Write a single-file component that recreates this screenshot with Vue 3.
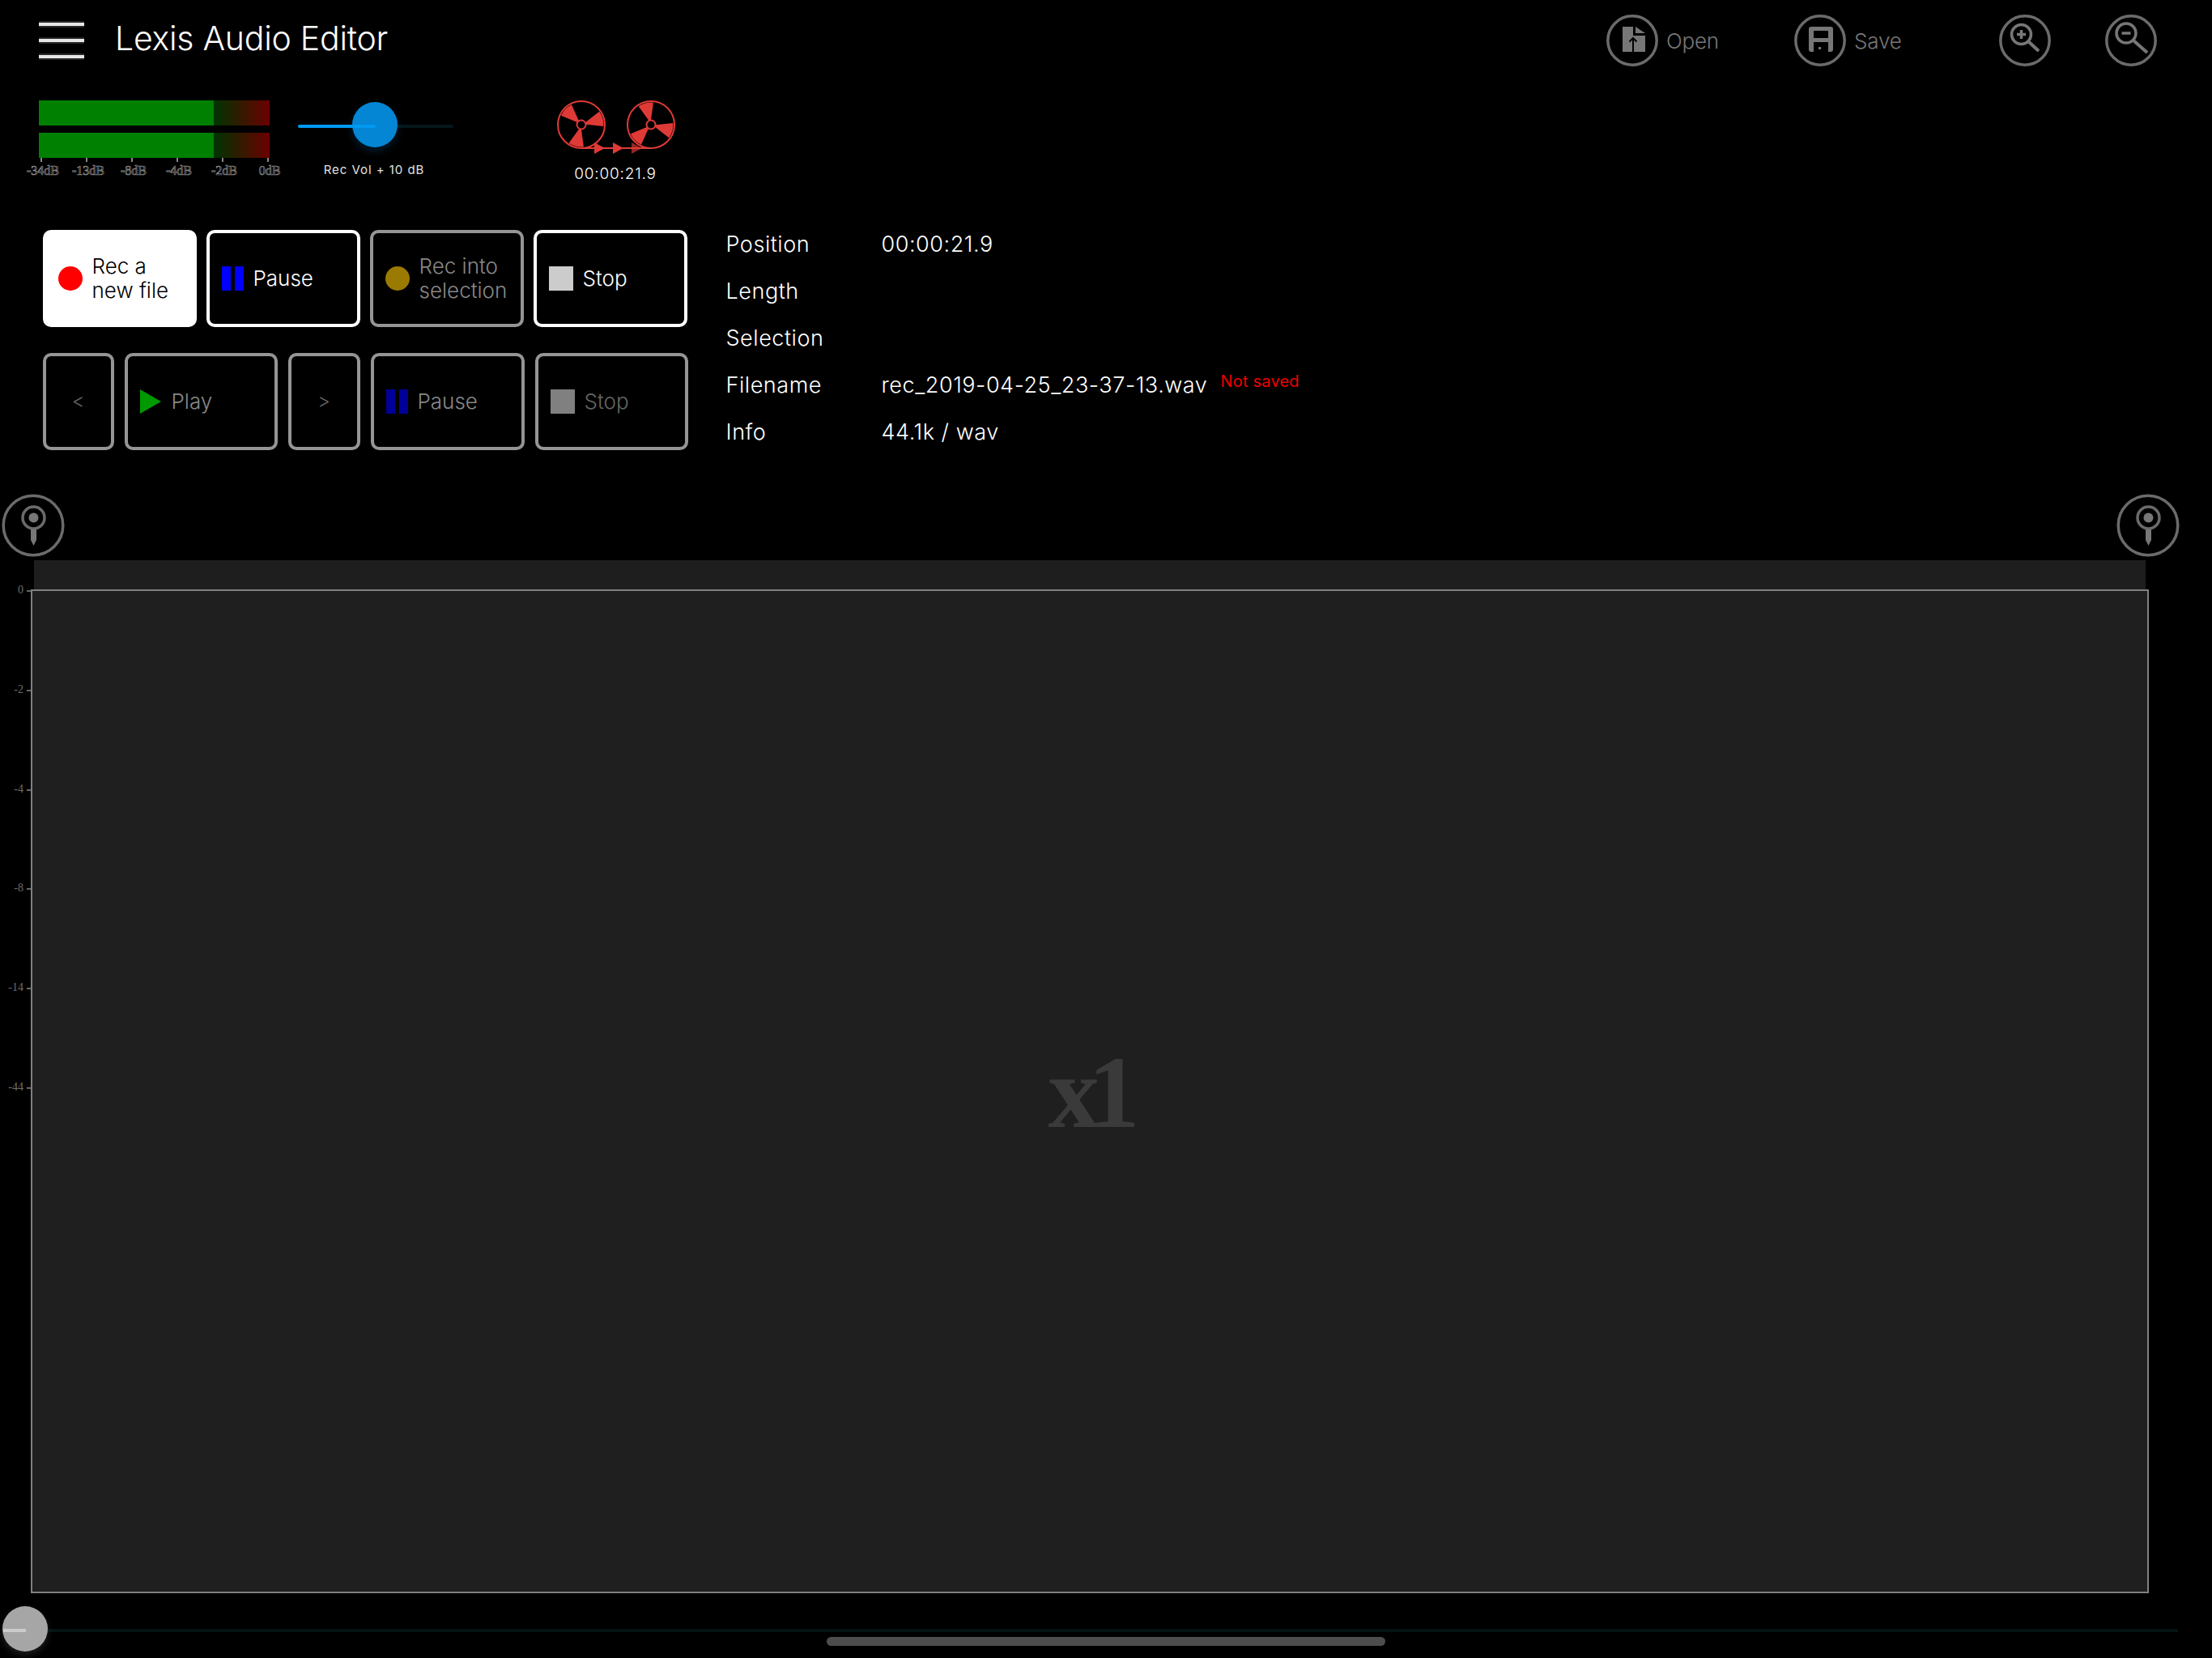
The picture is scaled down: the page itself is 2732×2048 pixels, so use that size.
<script setup>
const dbScale = ['-34dB', '-13dB', '-8dB', '-4dB', '-2dB', '0dB']
const axis = ['0', '-2', '-4', '-8', '-14', '-44']

const recButtons = [
  { id: 'rec', icon: 'dot red', lines: ['Rec a', 'new file'], cls: 'active' },
  { id: 'pause', icon: 'bars', lines: ['Pause'], cls: '' },
  { id: 'into', icon: 'dot amber', lines: ['Rec into', 'selection'], cls: 'dim' },
  { id: 'stop', icon: 'square', lines: ['Stop'], cls: '' },
]

const info = [
  ['Position', '00:00:21.9'],
  ['Length', ''],
  ['Selection', ''],
  ['Filename', 'rec_2019-04-25_23-37-13.wav'],
  ['Info', '44.1k / wav'],
]

// one blade of a tape reel, angles in degrees
function wedge(cx, cy, mid) {
  const half = 20
  const pt = (r, a) => {
    const rad = (a * Math.PI) / 180
    return `${(cx + r * Math.cos(rad)).toFixed(1)} ${(cy + r * Math.sin(rad)).toFixed(1)}`
  }
  return `M${pt(6, mid - 14)} L${pt(27.5, mid - half)} A27.5 27.5 0 0 1 ${pt(27.5, mid + half)} L${pt(6, mid + 14)}Z`
}

const leftBlades = [104, 224, 344].map((a) => wedge(33, 33, a))
const rightBlades = [16, 136, 256].map((a) => wedge(119, 33, a))
</script>

<template>
  <div class="app">
    <header class="topbar">
      <div class="burger"><span></span><span></span><span></span></div>
      <h1 class="title">Lexis Audio Editor</h1>
      <div class="tools">
        <div class="tool tool-open">
          <svg class="round" viewBox="0 0 64 64">
            <circle cx="32" cy="32" r="30.2" class="ring" />
            <path class="solid" d="M20 15H33V26H48V46H20Z" />
            <path class="solid" d="M36 15L48 23H36Z" />
            <path class="cut" d="M33 46V29M28.5 33.5L33 29L37.5 33.5" />
          </svg>
          <span>Open</span>
        </div>
        <div class="tool tool-save">
          <svg class="round" viewBox="0 0 64 64">
            <circle cx="32" cy="32" r="30.2" class="ring" />
            <rect class="solid" x="18" y="15" width="30" height="31" rx="3" />
            <rect class="hole" x="24" y="20" width="18" height="9" />
            <rect class="hole" x="24" y="34" width="18" height="12" />
            <rect class="solid" x="30" y="40" width="3" height="3" />
          </svg>
          <span>Save</span>
        </div>
        <svg class="round zoom-in" viewBox="0 0 64 64">
          <circle cx="32" cy="32" r="30.2" class="ring" />
          <circle cx="27.5" cy="24.5" r="12" class="line" />
          <path class="line" d="M27.5 19V30M22 24.5H33" />
          <path class="handle" d="M36.5 33.5L49 45" />
        </svg>
        <svg class="round zoom-out" viewBox="0 0 64 64">
          <circle cx="32" cy="32" r="30.2" class="ring" />
          <circle cx="26" cy="23" r="12" class="line" />
          <path class="line" d="M20.5 23H31.5" />
          <path class="handle" d="M35 32L52 47" />
        </svg>
      </div>
    </header>

    <section class="levels">
      <div class="meter">
        <div class="meter-bar"><div class="meter-fill"></div></div>
        <div class="meter-bar"><div class="meter-fill"></div></div>
        <div class="db-scale">
          <div v-for="d in dbScale" :key="d" class="db-cell">
            <i></i>
            <span>{{ d }}</span>
          </div>
        </div>
      </div>

      <div class="rec-vol">
        <div class="slider">
          <div class="slider-track"></div>
          <div class="slider-thumb"></div>
          <div class="slider-fill"></div>
        </div>
        <div class="rec-vol-label">Rec Vol + 10 dB</div>
      </div>

      <div class="reels">
        <svg viewBox="0 0 152 70" width="152" height="70">
          <path v-for="(d, i) in leftBlades" :key="'l' + i" class="blade" :d="d" />
          <path v-for="(d, i) in rightBlades" :key="'r' + i" class="blade" :d="d" />
          <g class="reel">
            <circle cx="33" cy="33" r="29" />
            <circle cx="119" cy="33" r="29" />
            <circle cx="33" cy="33" r="5.5" />
            <circle cx="119" cy="33" r="5.5" />
          </g>
          <path class="tape" d="M33 62H119" />
          <path class="blade" d="M49 55L62 62L49 69Z" />
          <path class="blade" d="M72 55L85 62L72 69Z" />
          <path class="blade faded" d="M95 55L108 62L95 69Z" />
        </svg>
        <div class="reels-time">00:00:21.9</div>
      </div>
    </section>

    <section class="controls">
      <div class="buttons">
        <div class="btn-row rec-row">
          <div v-for="b in recButtons" :key="b.id" class="btn" :class="b.cls">
            <i v-if="b.icon.startsWith('dot')" :class="b.icon"></i>
            <i v-else-if="b.icon === 'bars'" class="bars"><b></b><b></b></i>
            <i v-else class="square"></i>
            <span class="btn-text">
              <span v-for="l in b.lines" :key="l">{{ l }}</span>
            </span>
          </div>
        </div>
        <div class="btn-row play-row">
          <div class="btn dim narrow"><span class="chevron">&lt;</span></div>
          <div class="btn dim play">
            <i class="triangle"></i>
            <span class="btn-text">Play</span>
          </div>
          <div class="btn dim narrow wide-1"><span class="chevron">&gt;</span></div>
          <div class="btn dim pause-2">
            <i class="bars dark"><b></b><b></b></i>
            <span class="btn-text">Pause</span>
          </div>
          <div class="btn dim stop-2">
            <i class="square grey"></i>
            <span class="btn-text faint">Stop</span>
          </div>
        </div>
      </div>

      <dl class="info">
        <template v-for="row in info" :key="row[0]">
          <dt>{{ row[0] }}</dt>
          <dd>
            {{ row[1] }}
            <small v-if="row[0] === 'Filename'">Not saved</small>
          </dd>
        </template>
      </dl>
    </section>

    <div class="pins">
      <svg v-for="p in 2" :key="p" class="pin" viewBox="0 0 78 78">
        <circle cx="39" cy="39" r="36.8" class="pin-ring" />
        <circle cx="39.5" cy="29.5" r="13.5" class="pin-head" />
        <circle cx="39.5" cy="29.5" r="6" class="solid" />
        <path class="solid" d="M36 44H43V57L39.5 64L36 57Z" />
      </svg>
    </div>

    <div class="strip"></div>

    <div class="wave-row">
      <div class="axis">
        <div v-for="a in axis" :key="a" class="tick">
          <span>{{ a }}</span>
          <i></i>
        </div>
      </div>
      <div class="wave">
        <span class="zoom-level">x1</span>
      </div>
    </div>

    <div class="scrub">
      <div class="scrub-track"></div>
      <div class="scrub-thumb"></div>
      <div class="scrub-fill"></div>
    </div>

    <div class="home-bar"></div>
  </div>
</template>

<style>
html,
body {
  margin: 0;
  background: #000;
}
</style>

<style scoped>
.app {
  position: relative;
  width: 2732px;
  height: 2048px;
  overflow: hidden;
  display: flex;
  flex-direction: column;
  background: #000;
  color: #fff;
  font-family: Inter, "Liberation Sans", sans-serif;
}

.topbar {
  height: 100px;
  flex: none;
  display: flex;
  align-items: center;
  padding-left: 48px;
}

.burger {
  width: 56px;
  display: flex;
  flex-direction: column;
  gap: 16px;
}

.burger span {
  height: 4px;
  background: #e6e6e6;
  box-shadow: 0 -2px 0 #262626, 0 2px 0 #262626;
}

.title {
  margin: -6px 0 0 38px;
  font-size: 41px;
  font-weight: 300;
  letter-spacing: -0.25px;
}

.tools {
  position: absolute;
  top: 18px;
  left: 1984px;
  display: flex;
}

.tool {
  display: flex;
  align-items: center;
  gap: 10px;
  color: #777;
  font-size: 26px;
  font-weight: 300;
  letter-spacing: -0.2px;
}

.tool-open {
  width: 232px;
}

.tool-save {
  width: 253px;
}

.round {
  width: 64px;
  height: 64px;
  flex: none;
}

.zoom-in {
  margin-right: 67px;
}

.ring,
.pin-ring,
.pin-head,
.line {
  fill: none;
  stroke: #6b6b6b;
  stroke-width: 3.5;
}

.line {
  stroke: #777;
}

.handle {
  fill: none;
  stroke: #777;
  stroke-width: 4;
}

.solid {
  fill: #777;
}

.hole {
  fill: #000;
}

.cut {
  fill: none;
  stroke: #000;
  stroke-width: 2;
}

.levels {
  height: 172px;
  flex: none;
  display: flex;
  align-items: flex-start;
  padding: 24px 0 0 48px;
  box-sizing: border-box;
}

.meter {
  width: 285px;
}

.meter-bar {
  height: 31px;
  margin-bottom: 9px;
  background: linear-gradient(90deg, #003300 76%, #6b0000 100%);
}

.meter-fill {
  width: 216px;
  height: 100%;
  background: #008000;
}

.db-scale {
  display: flex;
  margin: -9px 0 0 -25px;
  width: 336px;
}

.db-cell {
  width: 56px;
  display: flex;
  flex-direction: column;
  align-items: center;
}

.db-cell i {
  width: 2px;
  height: 5px;
  background: #888;
}

.db-cell span {
  margin-top: 2px;
  padding-left: 4px;
  font: 16px/18px "Liberation Serif", serif;
  color: transparent;
  -webkit-text-stroke: 0.7px #8c8c8c;
  white-space: nowrap;
}

.rec-vol {
  width: 192px;
  margin-left: 35px;
  display: flex;
  flex-direction: column;
  align-items: center;
}

.slider {
  position: relative;
  width: 100%;
  height: 60px;
}

.slider-track {
  position: absolute;
  top: 30px;
  left: 0;
  right: 0;
  height: 4px;
  border-radius: 2px;
  background: #04181c;
}

.slider-fill {
  position: absolute;
  top: 30px;
  left: 0;
  width: 96px;
  height: 4px;
  border-radius: 2px;
  background: #0099f2;
}

.slider-thumb {
  position: absolute;
  top: 2px;
  left: 67px;
  width: 56px;
  height: 56px;
  border-radius: 50%;
  background: #0486d4;
  box-shadow: 0 5px 10px rgba(0, 140, 230, 0.2);
}

.rec-vol-label {
  margin: 16px 4px 0 0;
  font-size: 15px;
  line-height: 20px;
  letter-spacing: 0.95px;
  color: #e0e0e0;
  white-space: nowrap;
}

.reels {
  margin: -3px 0 0 125px;
  width: 152px;
  display: flex;
  flex-direction: column;
  align-items: center;
}

.reels svg {
  display: block;
}

.reel {
  fill: none;
  stroke: #e03a37;
  stroke-width: 2;
}

.blade {
  fill: #e03a37;
}

.faded {
  opacity: 0.65;
}

.tape {
  fill: none;
  stroke: #e03a37;
  stroke-width: 2;
}

.reels-time {
  margin: 12px 2px 0 0;
  font-size: 19px;
  line-height: 24px;
  font-weight: 300;
  letter-spacing: 0.8px;
}

.controls {
  height: 290px;
  flex: none;
  display: flex;
  padding-left: 52.5px;
}

.buttons {
  width: 797px;
  margin-top: 12px;
  display: flex;
  flex-direction: column;
  gap: 32px;
}

.btn-row {
  display: flex;
}

.rec-row {
  gap: 12px;
}

.rec-row .btn {
  width: 190px;
}

.play-row {
  gap: 13px;
}

.btn {
  height: 120px;
  box-sizing: border-box;
  flex: none;
  display: flex;
  align-items: center;
  gap: 12px;
  padding-left: 15px;
  border: 4px solid #fff;
  border-radius: 10px;
  font-size: 26px;
  font-weight: 300;
  line-height: 30.5px;
}

.btn.active {
  background: #fff;
  color: #000;
}

.btn.dim {
  border-color: #959595;
  color: #888;
}

.narrow {
  width: 88px;
  padding-left: 0;
  justify-content: center;
}

.wide-1 {
  width: 89px;
}

.play {
  width: 189px;
}

.pause-2 {
  width: 190px;
}

.stop-2 {
  width: 189px;
}

.btn-text {
  display: flex;
  flex-direction: column;
  white-space: nowrap;
}

.faint {
  color: #666;
}

.chevron {
  color: #666;
  font-size: 24px;
}

.dot {
  width: 30px;
  height: 30px;
  flex: none;
  border-radius: 50%;
}

.red {
  background: #ff0000;
}

.amber {
  background: #9a7a00;
}

.bars {
  width: 27px;
  height: 30px;
  flex: none;
  display: flex;
  justify-content: space-between;
}

.bars b {
  width: 11px;
  background: #0000ff;
}

.bars.dark b {
  background: #000099;
}

.square {
  width: 30px;
  height: 30px;
  flex: none;
  background: #ccc;
}

.square.grey {
  background: #808080;
}

.triangle {
  width: 0;
  height: 0;
  flex: none;
  margin-right: 1px;
  border-left: 26px solid #009900;
  border-top: 15px solid transparent;
  border-bottom: 15px solid transparent;
}

.info {
  margin: 0 0 0 47px;
  display: grid;
  grid-template-columns: 192px auto;
  grid-auto-rows: 58px;
  align-items: center;
  align-content: start;
  font-size: 27px;
  font-weight: 300;
  letter-spacing: 0.55px;
}

.info dd {
  margin: 0;
  position: relative;
  white-space: nowrap;
}

.info small {
  position: relative;
  top: -7px;
  margin-left: 8px;
  color: #ee0000;
  font-size: 20px;
  font-weight: 400;
  letter-spacing: 0.2px;
}

.pins {
  height: 78px;
  flex: none;
  margin-top: 48px;
  display: flex;
  justify-content: space-between;
  padding: 0 40px 0 2px;
}

.pin {
  width: 78px;
  height: 78px;
}

.strip {
  height: 36px;
  flex: none;
  margin: 4px 0 0 42px;
  width: 2608px;
  background: #1e1e1e;
}

.wave-row {
  display: flex;
  height: 240px;
  flex: 1 0 auto;
  max-height: 1240px;
}

.axis {
  width: 38px;
  flex: none;
}

.tick {
  height: 122.8px;
  display: flex;
  justify-content: flex-end;
  gap: 4px;
}

.tick span {
  margin-top: -7px;
  font: 14px/16px "Liberation Serif", serif;
  color: #6e6e6e;
}

.tick i {
  width: 5px;
  height: 2px;
  margin-top: 1px;
  background: #666;
}

.wave {
  width: 2616px;
  height: 1240px;
  box-sizing: border-box;
  display: flex;
  align-items: center;
  justify-content: center;
  border: 2px solid #808080;
  background: #1f1f1f;
}

.zoom-level {
  margin: 2px 0 0 -4px;
  font: bold 127px/1 "Liberation Serif", serif;
  letter-spacing: -14px;
  color: #3a3a3a;
}

.scrub {
  position: relative;
  height: 56px;
  flex: none;
  margin-top: 16px;
}

.scrub-track {
  position: absolute;
  top: 28px;
  left: 4px;
  width: 2686px;
  height: 4px;
  background: #041414;
}

.scrub-fill {
  position: absolute;
  top: 28px;
  left: 4px;
  width: 28px;
  height: 4px;
  background: #ccc;
}

.scrub-thumb {
  position: absolute;
  top: 0;
  left: 3px;
  width: 56px;
  height: 56px;
  border-radius: 50%;
  background: #a6a6a6;
  box-shadow: 0 4px 8px rgba(255, 255, 255, 0.12);
}

.home-bar {
  position: absolute;
  left: 1021px;
  bottom: 15px;
  width: 690px;
  height: 11px;
  border-radius: 6px;
  background: #4d4d4d;
}
</style>
